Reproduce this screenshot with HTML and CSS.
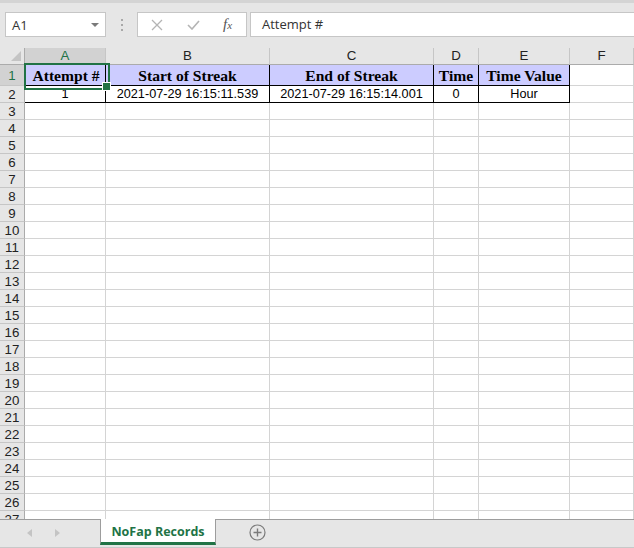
FILE: index.html
```html
<!DOCTYPE html>
<html>
<head>
<meta charset="utf-8">
<link rel="stylesheet" href="styles.css">
</head>
<body>
<div class="topbar">
  <div class="namebox"><span>A1</span><span class="caret"></span></div>
  <div class="grip"><i></i><i></i><i></i></div>
  <div class="fxbox">
    <svg class="ico-x" width="12" height="12" viewBox="0 0 12 12"><path d="M1 1 L11 11 M11 1 L1 11" stroke="#b4b4b4" stroke-width="1.3" fill="none"/></svg>
    <svg class="ico-ok" width="13" height="10" viewBox="0 0 13 10"><path d="M1 5 L5 9 L12 1" stroke="#b4b4b4" stroke-width="1.6" fill="none"/></svg>
    <span class="fx">f<span class="fxs">x</span></span>
  </div>
  <div class="formula">Attempt #</div>
</div>

<div class="sheet">
  <div class="corner"></div><div class="ch sel">A</div><div class="ch">B</div><div class="ch">C</div><div class="ch">D</div><div class="ch">E</div><div class="ch">F</div>

  <div class="rh sel">1</div><div class="c hd a1">Attempt #</div><div class="c hd">Start of Streak</div><div class="c hd">End of Streak</div><div class="c hd">Time</div><div class="c hd">Time Value</div><div class="c"></div>

  <div class="rh">2</div><div class="c dt">1</div><div class="c dt">2021-07-29 16:15:11.539</div><div class="c dt">2021-07-29 16:15:14.001</div><div class="c dt">0</div><div class="c dt">Hour</div><div class="c"></div>

  <div class="rh">3</div><div class="c"></div><div class="c"></div><div class="c"></div><div class="c"></div><div class="c"></div><div class="c"></div>
  <div class="rh">4</div><div class="c"></div><div class="c"></div><div class="c"></div><div class="c"></div><div class="c"></div><div class="c"></div>
  <div class="rh">5</div><div class="c"></div><div class="c"></div><div class="c"></div><div class="c"></div><div class="c"></div><div class="c"></div>
  <div class="rh">6</div><div class="c"></div><div class="c"></div><div class="c"></div><div class="c"></div><div class="c"></div><div class="c"></div>
  <div class="rh">7</div><div class="c"></div><div class="c"></div><div class="c"></div><div class="c"></div><div class="c"></div><div class="c"></div>
  <div class="rh">8</div><div class="c"></div><div class="c"></div><div class="c"></div><div class="c"></div><div class="c"></div><div class="c"></div>
  <div class="rh">9</div><div class="c"></div><div class="c"></div><div class="c"></div><div class="c"></div><div class="c"></div><div class="c"></div>
  <div class="rh">10</div><div class="c"></div><div class="c"></div><div class="c"></div><div class="c"></div><div class="c"></div><div class="c"></div>
  <div class="rh">11</div><div class="c"></div><div class="c"></div><div class="c"></div><div class="c"></div><div class="c"></div><div class="c"></div>
  <div class="rh">12</div><div class="c"></div><div class="c"></div><div class="c"></div><div class="c"></div><div class="c"></div><div class="c"></div>
  <div class="rh">13</div><div class="c"></div><div class="c"></div><div class="c"></div><div class="c"></div><div class="c"></div><div class="c"></div>
  <div class="rh">14</div><div class="c"></div><div class="c"></div><div class="c"></div><div class="c"></div><div class="c"></div><div class="c"></div>
  <div class="rh">15</div><div class="c"></div><div class="c"></div><div class="c"></div><div class="c"></div><div class="c"></div><div class="c"></div>
  <div class="rh">16</div><div class="c"></div><div class="c"></div><div class="c"></div><div class="c"></div><div class="c"></div><div class="c"></div>
  <div class="rh">17</div><div class="c"></div><div class="c"></div><div class="c"></div><div class="c"></div><div class="c"></div><div class="c"></div>
  <div class="rh">18</div><div class="c"></div><div class="c"></div><div class="c"></div><div class="c"></div><div class="c"></div><div class="c"></div>
  <div class="rh">19</div><div class="c"></div><div class="c"></div><div class="c"></div><div class="c"></div><div class="c"></div><div class="c"></div>
  <div class="rh">20</div><div class="c"></div><div class="c"></div><div class="c"></div><div class="c"></div><div class="c"></div><div class="c"></div>
  <div class="rh">21</div><div class="c"></div><div class="c"></div><div class="c"></div><div class="c"></div><div class="c"></div><div class="c"></div>
  <div class="rh">22</div><div class="c"></div><div class="c"></div><div class="c"></div><div class="c"></div><div class="c"></div><div class="c"></div>
  <div class="rh">23</div><div class="c"></div><div class="c"></div><div class="c"></div><div class="c"></div><div class="c"></div><div class="c"></div>
  <div class="rh">24</div><div class="c"></div><div class="c"></div><div class="c"></div><div class="c"></div><div class="c"></div><div class="c"></div>
  <div class="rh">25</div><div class="c"></div><div class="c"></div><div class="c"></div><div class="c"></div><div class="c"></div><div class="c"></div>
  <div class="rh">26</div><div class="c"></div><div class="c"></div><div class="c"></div><div class="c"></div><div class="c"></div><div class="c"></div>
  <div class="rh">27</div><div class="c"></div><div class="c"></div><div class="c"></div><div class="c"></div><div class="c"></div><div class="c"></div>
</div>

<div class="tabs">
  <div class="nav">
    <svg width="5" height="8" viewBox="0 0 5 8"><path d="M5 0 L0 4 L5 8 Z" fill="#c4c4c4"/></svg>
    <svg width="5" height="8" viewBox="0 0 5 8"><path d="M0 0 L5 4 L0 8 Z" fill="#c4c4c4"/></svg>
  </div>
  <div class="tab">NoFap Records</div>
  <svg class="add" width="17" height="17" viewBox="0 0 17 17"><circle cx="8.5" cy="8.5" r="7.5" stroke="#7a7a7a" stroke-width="1.2" fill="none"/><path d="M8.5 4.5 V12.5 M4.5 8.5 H12.5" stroke="#7a7a7a" stroke-width="1.4"/></svg>
</div>
</body>
</html>
```

FILE: styles.css
```css
* { box-sizing: border-box; }
html, body { margin: 0; padding: 0; }
body {
  width: 634px;
  height: 548px;
  overflow: hidden;
  background: #fff;
  font-family: "Liberation Sans", Arial, sans-serif;
}

.topbar {
  height: 48px;
  background: #e6e6e6;
  border-top: 3px solid #d4d4d4;
  display: flex;
  align-items: flex-start;
  padding-top: 9px;
  font-family: "Open Sans", "Segoe UI", sans-serif;
  font-size: 13px;
  color: #333;
}
.namebox {
  margin-left: 5px;
  width: 101px;
  height: 25px;
  background: #fff;
  border: 1px solid #c6c6c6;
  display: flex;
  align-items: center;
  justify-content: space-between;
  padding: 0 6px 0 6px;
}
.caret {
  width: 0; height: 0;
  border-left: 4px solid transparent;
  border-right: 4px solid transparent;
  border-top: 4px solid #7a7a7a;
  margin-top: 1px;
}
.grip {
  width: 31px;
  height: 25px;
  display: flex;
  flex-direction: column;
  align-items: center;
  justify-content: center;
  gap: 3px;
}
.grip i {
  display: block;
  width: 2px;
  height: 2px;
  background: #a8a8a8;
}
.fxbox {
  width: 110px;
  height: 25px;
  background: #fff;
  border: 1px solid #c6c6c6;
  display: flex;
  align-items: center;
  padding-left: 13px;
}
.ico-x { margin-right: 24px; }
.ico-ok { margin-right: 23px; }
.fx {
  font-family: "Liberation Serif", "Times New Roman", serif;
  font-style: italic;
  font-size: 15px;
  color: #555;
  line-height: 1;
}
.fxs { font-size: 11px; }
.formula {
  margin-left: 3px;
  flex: 1;
  height: 25px;
  background: #fff;
  border: 1px solid #c6c6c6;
  border-right: none;
  padding-left: 11px;
  line-height: 23px;
}

.sheet {
  height: 471px;
  overflow: hidden;
  display: grid;
  grid-template-columns: 25px 81px 164px 164px 45px 91px 64px;
  grid-template-rows: 17px 21px repeat(26, 17px);
  font-size: 12.7px;
}
.corner {
  background: #e6e6e6;
  border-right: 1px solid #ababab;
  border-bottom: 1px solid #ababab;
  position: relative;
}
.corner::after {
  content: "";
  position: absolute;
  right: 3px;
  bottom: 3px;
  width: 0; height: 0;
  border-left: 10px solid transparent;
  border-bottom: 10px solid #c4c4c4;
}
.ch {
  background: #e6e6e6;
  border-right: 1px solid #c6c6c6;
  border-bottom: 1px solid #ababab;
  text-align: center;
  line-height: 16px;
  font-size: 13.3px;
  color: #222;
}
.rh {
  background: #e6e6e6;
  border-right: 1px solid #ababab;
  border-bottom: 1px solid #c6c6c6;
  text-align: center;
  font-size: 13.3px;
  color: #222;
  display: flex;
  align-items: center;
  justify-content: center;
}
.ch.sel, .rh.sel {
  background: #d2d2d2;
  color: #217346;
}
.c {
  border-right: 1px solid #d4d4d4;
  border-bottom: 1px solid #d4d4d4;
  display: flex;
  align-items: center;
  justify-content: center;
  white-space: nowrap;
}
.hd {
  background: #ccccff;
  border-right-color: #000;
  border-bottom-color: #000;
  font-family: "Liberation Serif", "Times New Roman", serif;
  font-weight: bold;
  font-size: 15.6px;
  color: #000;
  padding-top: 1px;
}
.a1 { padding-left: 2px; }
.dt {
  border-right-color: #000;
  border-bottom-color: #000;
  color: #000;
}
.a1 { position: relative; }
.a1::before {
  content: "";
  position: absolute;
  left: -1px;
  top: -2px;
  width: 82px;
  height: 23px;
  border: 2px solid #217346;
}
.a1::after {
  content: "";
  position: absolute;
  left: 77px;
  top: 17px;
  width: 7px;
  height: 7px;
  background: #217346;
  border: 1px solid #fff;
}

.tabs {
  height: 29px;
  background: #e6e6e6;
  border-top: 1px solid #9d9d9d;
  border-bottom: 1px solid #c8c8c8;
  display: flex;
  align-items: flex-start;
  font-family: "Open Sans", "Segoe UI", sans-serif;
}
.nav {
  width: 100px;
  height: 26px;
  display: flex;
  align-items: center;
  padding-left: 27px;
  gap: 23px;
}
.tab {
  margin-top: -1px;
  width: 116px;
  height: 26px;
  background: #fff;
  border-left: 1px solid #9d9d9d;
  border-right: 1px solid #9d9d9d;
  border-bottom: 3px solid #217346;
  color: #217346;
  font-weight: bold;
  font-size: 12.5px;
  text-align: center;
  line-height: 25px;
}
.add {
  margin-left: 33px;
  margin-top: 4px;
}
```
